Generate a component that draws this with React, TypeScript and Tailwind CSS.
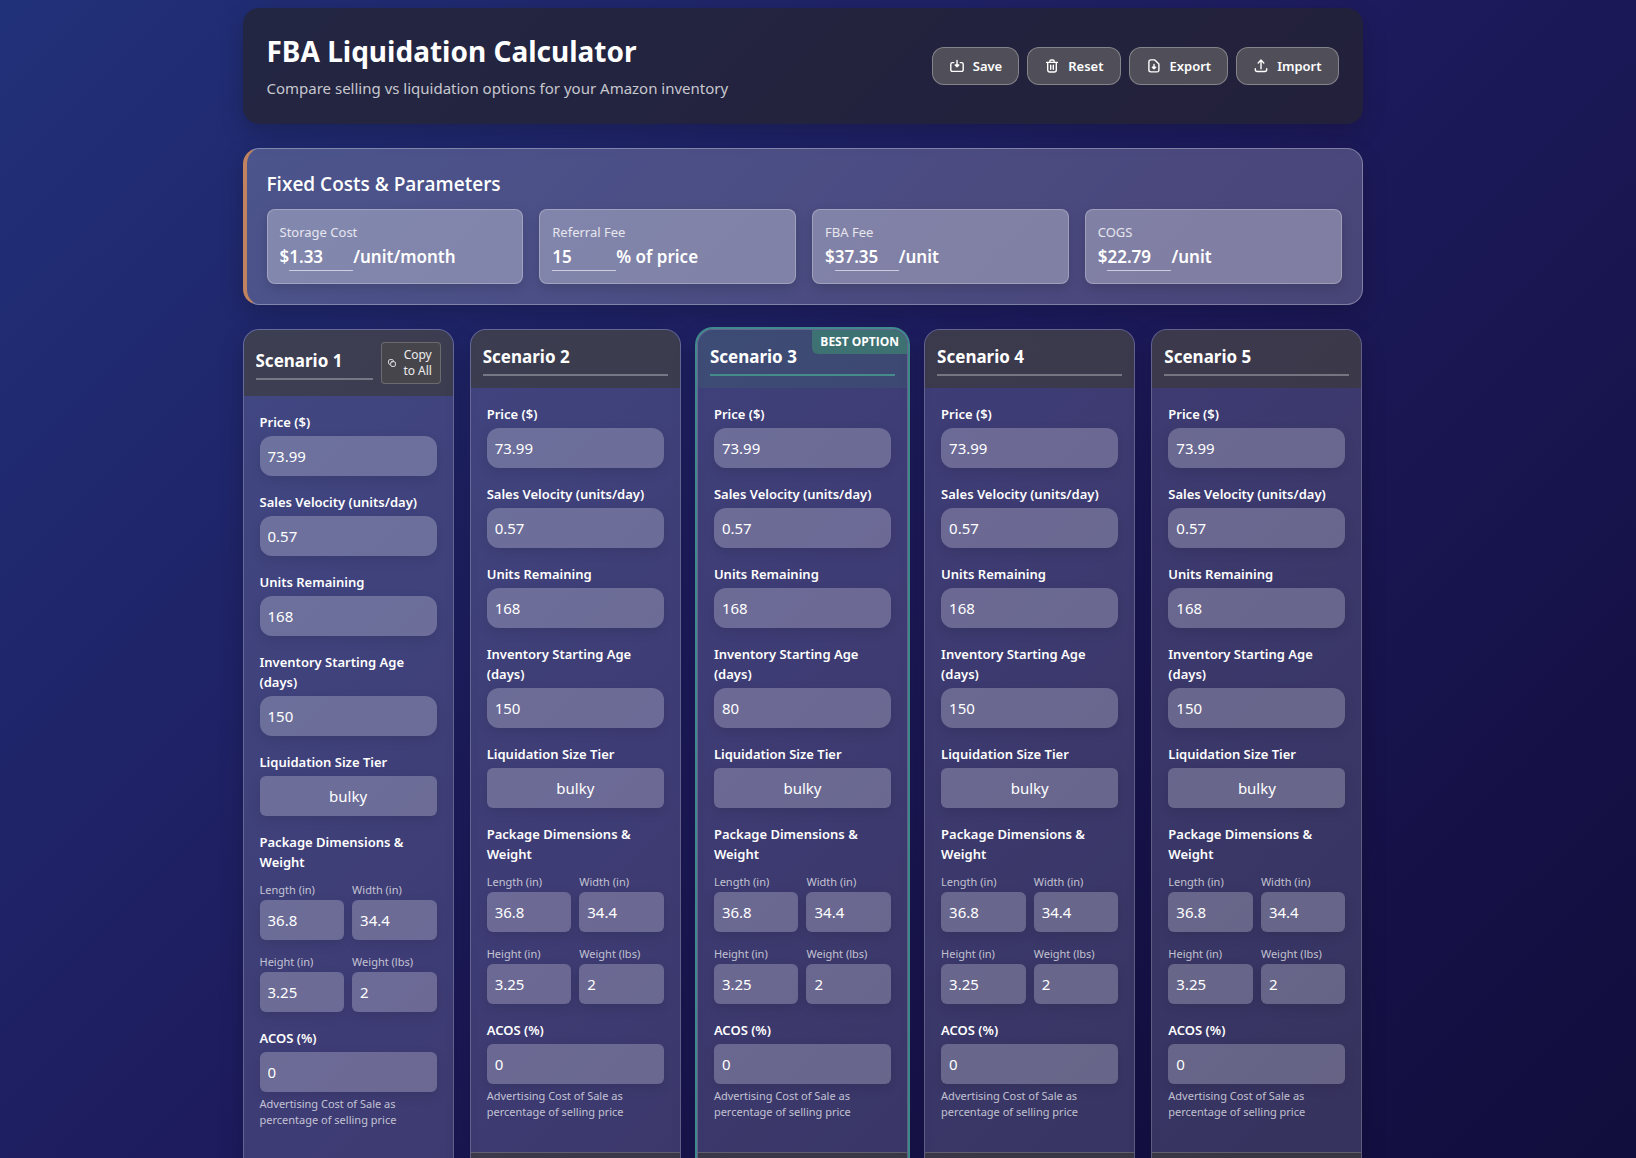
import { useState } from "react";
import type { ReactNode } from "react";

interface Scenario {
  name: string;
  price: string;
  velocity: string;
  units: string;
  age: string;
  tier: string;
  length: string;
  width: string;
  height: string;
  weight: string;
  acos: string;
}

type Field = keyof Scenario;

const BEST_OPTION = 2;

const baseScenario: Omit<Scenario, "name"> = {
  price: "73.99",
  velocity: "0.57",
  units: "168",
  age: "150",
  tier: "bulky",
  length: "36.8",
  width: "34.4",
  height: "3.25",
  weight: "2",
  acos: "0",
};

const initialScenarios: Scenario[] = [
  { ...baseScenario, name: "Scenario 1" },
  { ...baseScenario, name: "Scenario 2" },
  { ...baseScenario, name: "Scenario 3", age: "80" },
  { ...baseScenario, name: "Scenario 4" },
  { ...baseScenario, name: "Scenario 5" },
];

const mainFields: { key: Field; label: string }[] = [
  { key: "price", label: "Price ($)" },
  { key: "velocity", label: "Sales Velocity (units/day)" },
  { key: "units", label: "Units Remaining" },
  { key: "age", label: "Inventory Starting Age (days)" },
];

const sizeFields: { key: Field; label: string }[] = [
  { key: "length", label: "Length (in)" },
  { key: "width", label: "Width (in)" },
  { key: "height", label: "Height (in)" },
  { key: "weight", label: "Weight (lbs)" },
];

const fixedCosts = [
  { id: "storage", label: "Storage Cost", prefix: "$", value: "1.33", suffix: "/unit/month" },
  { id: "referral", label: "Referral Fee", prefix: "", value: "15", suffix: "% of price" },
  { id: "fba", label: "FBA Fee", prefix: "$", value: "37.35", suffix: "/unit" },
  { id: "cogs", label: "COGS", prefix: "$", value: "22.79", suffix: "/unit" },
];

const Icon = ({ children, className = "size-4" }: { children: ReactNode; className?: string }) => (
  <svg
    viewBox="0 0 16 16"
    fill="none"
    stroke="currentColor"
    strokeWidth="1.4"
    strokeLinecap="round"
    strokeLinejoin="round"
    className={`${className} shrink-0`}
    aria-hidden="true"
  >
    {children}
  </svg>
);

const SaveIcon = () => (
  <Icon>
    <path d="M4.8 4.6H3.4a1.6 1.6 0 0 0-1.6 1.6v5.6a1.6 1.6 0 0 0 1.6 1.6h9.2a1.6 1.6 0 0 0 1.6-1.6V6.2a1.6 1.6 0 0 0-1.6-1.6h-1.4" />
    <path d="M8 2.4v6.2M6.2 6.9 8 8.7l1.8-1.8z" />
  </Icon>
);

const ResetIcon = () => (
  <Icon>
    <path d="M2.6 4.4h10.8M5.8 4.2V3.4a1.4 1.4 0 0 1 1.4-1.4h1.6a1.4 1.4 0 0 1 1.4 1.4v.8" />
    <path d="M3.7 4.6v7.4a2 2 0 0 0 2 2h4.6a2 2 0 0 0 2-2V4.6M6.7 7.2v4M9.3 7.2v4" />
  </Icon>
);

const ExportIcon = () => (
  <Icon>
    <path d="M2.9 3.7a1.8 1.8 0 0 1 1.8-1.8h4.1l4.1 4.1v6.1a1.8 1.8 0 0 1-1.8 1.8H4.7a1.8 1.8 0 0 1-1.8-1.8z" />
    <path d="M8 6.4v4.4M6.4 9.2 8 10.8l1.6-1.6z" />
  </Icon>
);

const ImportIcon = () => (
  <Icon>
    <path d="M8 10.8V2.2M5.2 4.9 8 2.1l2.8 2.8" />
    <path d="M2.3 10.8v.8a1.9 1.9 0 0 0 1.9 1.9h7.6a1.9 1.9 0 0 0 1.9-1.9v-.8" />
  </Icon>
);

const CopyIcon = () => (
  <Icon className="size-2">
    <rect x="5.4" y="5.4" width="9.4" height="9.4" rx="2.6" strokeWidth="1.8" />
    <path d="M3.2 10.8a2.2 2.2 0 0 1-2-2.2V3.8a2.6 2.6 0 0 1 2.6-2.6h4.8a2.2 2.2 0 0 1 2.2 2" strokeWidth="1.8" />
  </Icon>
);

const HeaderButton = ({ icon, label, onClick }: { icon: ReactNode; label: string; onClick?: () => void }) => (
  <button
    type="button"
    onClick={onClick}
    className="flex items-center gap-2 rounded-xl border border-white/30 bg-[#504f59] px-4 py-2 text-[13px] leading-5 font-semibold text-white"
  >
    {icon}
    {label}
  </button>
);

const FixedCost = ({ cost }: { cost: (typeof fixedCosts)[0] }) => (
  <div className="rounded-lg border border-white/25 bg-white/30 p-3 shadow-[0_4px_12px_rgba(0,0,0,0.15)]">
    <label htmlFor={cost.id} className="block text-[13px] leading-5 text-white/80">
      {cost.label}
    </label>
    <div className="flex items-end text-[17px] leading-7 font-semibold text-white">
      {cost.prefix}
      <input
        id={cost.id}
        type="text"
        defaultValue={cost.value}
        className="h-[29px] w-16 border-b border-white/60 outline-none"
      />
      {cost.suffix}
    </div>
  </div>
);

const ScenarioCard = ({
  scenario,
  index,
  onChange,
  onCopy,
}: {
  scenario: Scenario;
  index: number;
  onChange: (key: Field, value: string) => void;
  onCopy: () => void;
}) => {
  const best = index === BEST_OPTION;
  const fieldId = (key: string) => `scenario-${index}-${key}`;

  return (
    <section
      className={`relative flex min-w-0 flex-col overflow-hidden rounded-2xl border border-white/20 bg-white/15 ${
        best
          ? "shadow-[0_0_0_2px_#3f8a8c,0_8px_24px_rgba(0,0,0,0.2)]"
          : "shadow-[0_8px_24px_rgba(0,0,0,0.2)]"
      }`}
    >
      <div
        className={`flex items-center gap-2 p-3 ${
          best ? "bg-[#357864]/20" : "bg-[#3a3932]/60"
        }`}
      >
        <input
          type="text"
          aria-label="Scenario name"
          value={scenario.name}
          onChange={(e) => onChange("name", e.target.value)}
          className={`h-[34px] w-full min-w-0 flex-1 border-b-2 pb-1 text-[17px] font-bold text-white outline-none ${
            best ? "border-[#458b8c]" : "border-white/30"
          }`}
        />
        {index === 0 && (
          <button
            type="button"
            onClick={onCopy}
            className="flex w-15 items-center justify-between rounded border border-white/20 bg-[#46454c] px-1.5 py-1 text-xs text-white/90"
          >
            <CopyIcon />
            <span className="w-8 text-center">Copy to All</span>
          </button>
        )}
      </div>
      {best && (
        <span className="absolute top-0 right-0 rounded-bl-md bg-[#3e7172] px-2 py-1 font-['Open_Sans',sans-serif] text-xs leading-4 font-bold text-white">
          BEST OPTION
        </span>
      )}

      <div className="flex flex-col gap-4 px-4 pt-4 pb-8">
        {mainFields.map((field) => (
          <div key={field.key}>
            <label
              htmlFor={fieldId(field.key)}
              className="mb-1 block text-[13px] leading-5 font-semibold text-white"
            >
              {field.label}
            </label>
            <input
              id={fieldId(field.key)}
              type="text"
              value={scenario[field.key]}
              onChange={(e) => onChange(field.key, e.target.value)}
              className="h-10 w-full rounded-xl bg-white/24 px-2 text-[15px] text-white shadow-[0_4px_12px_rgba(0,0,0,0.1)] outline-none"
            />
          </div>
        ))}

        <div>
          <p className="mb-1 text-[13px] leading-5 font-semibold text-white">Liquidation Size Tier</p>
          <div className="flex h-10 items-center justify-center rounded-md bg-white/24 text-[15px] text-white shadow-[0_4px_12px_rgba(0,0,0,0.1)]">
            {scenario.tier}
          </div>
        </div>

        <div>
          <p className="mb-2 text-[13px] leading-5 font-semibold text-white">Package Dimensions &amp; Weight</p>
          <div className="grid grid-cols-2 gap-x-2 gap-y-3">
            {sizeFields.map((field) => (
              <div key={field.key}>
                <label htmlFor={fieldId(field.key)} className="block text-[11px] leading-5 text-white/70">
                  {field.label}
                </label>
                <input
                  id={fieldId(field.key)}
                  type="text"
                  value={scenario[field.key]}
                  onChange={(e) => onChange(field.key, e.target.value)}
                  className="h-10 w-full rounded-md bg-white/24 px-2 text-[15px] text-white shadow-[0_4px_12px_rgba(0,0,0,0.1)] outline-none"
                />
              </div>
            ))}
          </div>
        </div>

        <div>
          <label htmlFor={fieldId("acos")} className="mb-1 block text-[13px] leading-5 font-semibold text-white">
            ACOS (%)
          </label>
          <input
            id={fieldId("acos")}
            type="text"
            value={scenario.acos}
            onChange={(e) => onChange("acos", e.target.value)}
            className="h-10 w-full rounded-md bg-white/24 px-2 text-[15px] text-white shadow-[0_4px_12px_rgba(0,0,0,0.1)] outline-none"
          />
          <p className="mt-1 text-[11px] leading-4 text-white/70">
            Advertising Cost of Sale as percentage of selling price
          </p>
        </div>
      </div>

      <div className="min-h-16 flex-1 border-t border-white/20 bg-[#3a3932]/60" />
    </section>
  );
};

export default function App() {
  const [scenarios, setScenarios] = useState(initialScenarios);

  const updateScenario = (index: number, key: Field, value: string) => {
    setScenarios(scenarios.map((s, i) => (i === index ? { ...s, [key]: value } : s)));
  };

  const copyToAll = () => {
    setScenarios(scenarios.map((s) => ({ ...scenarios[0], name: s.name })));
  };

  return (
    <div className="min-h-screen bg-linear-135 from-[#213179] via-[#1d1a5c] to-[#100c3a] py-2 pr-[31px] font-['Noto_Sans','Open_Sans',sans-serif]">
      <main className="mx-auto flex max-w-[1120px] flex-col gap-6">
        <header className="flex items-center justify-between rounded-2xl bg-[#25242d]/70 p-6 shadow-[0_8px_24px_rgba(0,0,0,0.2)]">
          <div>
            <h1 className="text-[28px] leading-[38px] font-bold text-white">FBA Liquidation Calculator</h1>
            <p className="mt-1.5 text-[15px] leading-6 text-white/75">
              Compare selling vs liquidation options for your Amazon inventory
            </p>
          </div>
          <div className="flex gap-2">
            <HeaderButton icon={<SaveIcon />} label="Save" />
            <HeaderButton icon={<ResetIcon />} label="Reset" onClick={() => setScenarios(initialScenarios)} />
            <HeaderButton icon={<ExportIcon />} label="Export" />
            <HeaderButton icon={<ImportIcon />} label="Import" />
          </div>
        </header>

        <section className="rounded-2xl border border-l-4 border-white/30 border-l-[#c0825f] bg-white/20 p-5 shadow-[0_8px_24px_rgba(0,0,0,0.2)]">
          <h2 className="mb-2.5 font-['Open_Sans',sans-serif] text-[19px] leading-[30px] font-semibold text-white">
            Fixed Costs &amp; Parameters
          </h2>
          <div className="grid grid-cols-4 gap-4">
            {fixedCosts.map((cost) => (
              <FixedCost key={cost.id} cost={cost} />
            ))}
          </div>
        </section>

        <div className="grid grid-cols-5 gap-4">
          {scenarios.map((scenario, index) => (
            <ScenarioCard
              key={index}
              scenario={scenario}
              index={index}
              onChange={(key, value) => updateScenario(index, key, value)}
              onCopy={copyToAll}
            />
          ))}
        </div>
      </main>
    </div>
  );
}
